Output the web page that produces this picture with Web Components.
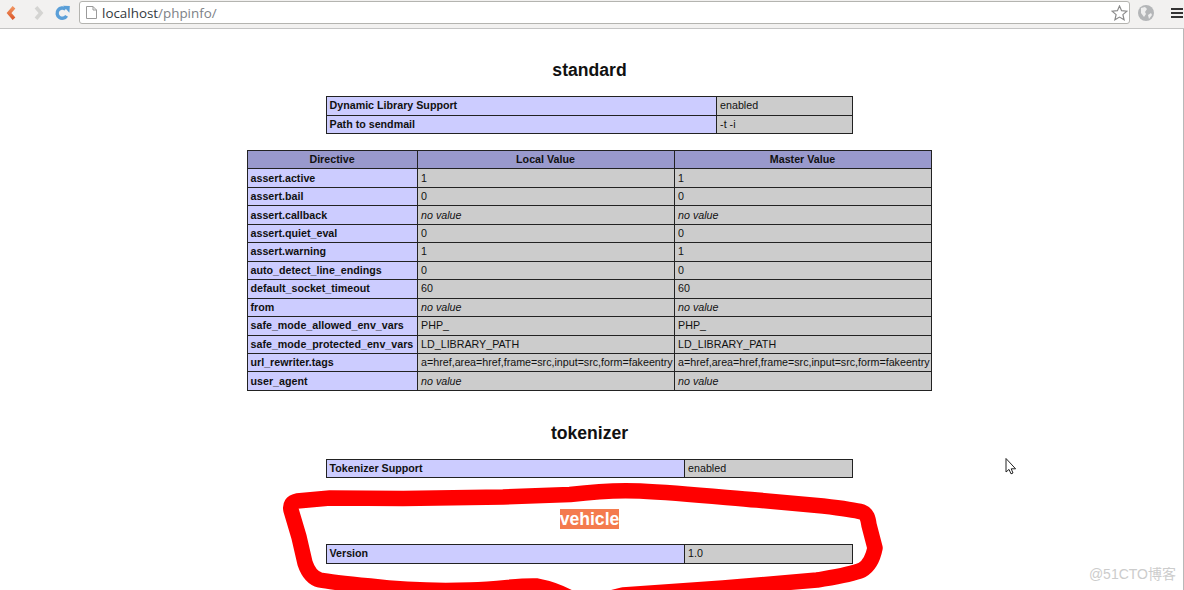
<!DOCTYPE html>
<html>
<head>
<meta charset="utf-8">
<title>phpinfo</title>
<style>
    html, body { margin: 0; padding: 0; height: 590px; overflow: hidden; background: #ffffff; }
    body { position: relative; font-family: "Liberation Sans", Arial, sans-serif; color: #111111; }
</style>
</head>
<body>
<browser-bar url-host="localhost" url-path="/phpinfo/"></browser-bar>
<php-page>
    <php-heading style="margin-top:31px">standard</php-heading>
    <php-table style="margin-top:16px" row-h="17.5" cols="390,136" rows='[["Dynamic Library Support","enabled"],["Path to sendmail","-t -i"]]'></php-table>
    <php-table style="margin-top:16px" row-h="17.46" cols="170,257,257" head='["Directive","Local Value","Master Value"]' rows='[
        ["assert.active","1","1"],
        ["assert.bail","0","0"],
        ["assert.callback","*no value","*no value"],
        ["assert.quiet_eval","0","0"],
        ["assert.warning","1","1"],
        ["auto_detect_line_endings","0","0"],
        ["default_socket_timeout","60","60"],
        ["from","*no value","*no value"],
        ["safe_mode_allowed_env_vars","PHP_","PHP_"],
        ["safe_mode_protected_env_vars","LD_LIBRARY_PATH","LD_LIBRARY_PATH"],
        ["url_rewriter.tags","a=href,area=href,frame=src,input=src,form=fakeentry","a=href,area=href,frame=src,input=src,form=fakeentry"],
        ["user_agent","*no value","*no value"]
    ]'></php-table>
    <php-heading style="margin-top:32px">tokenizer</php-heading>
    <php-table style="margin-top:16px" row-h="17" cols="358,168" rows='[["Tokenizer Support","enabled"]]'></php-table>
    <php-heading style="margin-top:31px" mark>vehicle</php-heading>
    <php-table style="margin-top:15px" row-h="18" cols="358,168" rows='[["Version","1.0"]]'></php-table>
</php-page>
<red-scribble></red-scribble>
<mouse-cursor></mouse-cursor>
<water-mark>@51CTO博客</water-mark>

<script>
class BrowserBar extends HTMLElement {
    constructor(){
        super();
        const shadow = this.attachShadow({mode:'open'});
        shadow.innerHTML = `
            <style>
                :host { display: flex; align-items: center; box-sizing: border-box; height: 29px; padding: 0 0 3px 0; background: #f2f1f0; border-bottom: 1px solid #c4c4c4; font-family: "Open Sans", "Liberation Sans", sans-serif; }
                svg { display: block; flex: none; }
                #nav { display: flex; align-items: center; padding-left: 6px; width: 79px; box-sizing: border-box; flex: none; }
                #nav svg:nth-child(2) { margin: 0 11px 0 18px; }
                #url { flex: 1; display: flex; align-items: center; height: 23px; box-sizing: border-box; background: #ffffff; border: 1px solid #b4b4b0; border-radius: 3px; padding: 0 1px 0 6px; font-size: 13.4px; }
                #host { color: #333a40; margin-left: 5px; }
                #path { color: #7d8186; flex: 1; }
                #tools { display: flex; align-items: center; gap: 17px; width: 54px; box-sizing: border-box; padding-left: 8px; flex: none; }
            </style>
            <div id="nav">
                <svg width="10" height="14" viewBox="0 0 10 14"><defs><linearGradient id="back" x1="0" y1="0" x2="0" y2="1"><stop offset="0" stop-color="#f0935f"/><stop offset="1" stop-color="#dc5a2c"/></linearGradient></defs><path d="M8 1.2 L3 7 L8 12.8" fill="none" stroke="url(#back)" stroke-width="3.6"/></svg>
                <svg width="10" height="14" viewBox="0 0 10 14"><path d="M2 1.2 L7 7 L2 12.8" fill="none" stroke="#d4d4d2" stroke-width="3.6"/></svg>
                <svg width="15" height="16" viewBox="0 0 15 16"><path d="M11.6 10.8 A5.1 5.1 0 1 1 10.6 4.3" fill="none" stroke="#5a9fd8" stroke-width="3.4"/><path d="M8 .8 L14.8 1 L14.4 7.8 Z" fill="#5a9fd8"/></svg>
            </div>
            <div id="url">
                <svg width="11" height="13" viewBox="0 0 11 13"><path d="M.5 .5 H7 L10.5 4 V12.5 H.5 Z M7 .5 V4 H10.5" fill="#ffffff" stroke="#9a9a9a"/></svg>
                <span id="host">${this.getAttribute("url-host")}</span><span id="path">${this.getAttribute("url-path")}</span>
                <svg width="17" height="16" viewBox="0 0 17 16"><path d="M8.5 1 L10.6 5.7 L15.9 6.2 L11.9 9.6 L13.1 14.8 L8.5 12.1 L3.9 14.8 L5.1 9.6 L1.1 6.2 L6.4 5.7 Z" fill="#ffffff" stroke="#8b8b8b" stroke-width="1.2"/></svg>
            </div>
            <div id="tools">
                <svg width="16" height="16" viewBox="0 0 16 16"><circle cx="8" cy="8" r="8" fill="#b4b6b8"/><path d="M3 3 L7 2 L9 4 L7 7 L8 9 L6 12 L3 8 Z M10 10 L13 8 L14 10 L11 14 Z" fill="#eeeeee"/></svg>
                <svg width="12" height="10" viewBox="0 0 12 10"><path d="M0 0 H12 V2 H0 Z M0 4 H12 V6 H0 Z M0 8 H12 V10 H0 Z" fill="#333333"/></svg>
            </div>
        `;
    }
}
customElements.define('browser-bar', BrowserBar);

class PhpPage extends HTMLElement {
    constructor(){
        super();
        this.attachShadow({mode:'open'}).innerHTML = `
            <style>
                :host { display: flex; flex-direction: column; align-items: center; box-sizing: border-box; height: 561px; padding-right: 5px; border-right: 1px solid #b8b8b8; overflow: hidden; }
            </style>
            <slot></slot>
        `;
    }
}
customElements.define('php-page', PhpPage);

class PhpHeading extends HTMLElement {
    constructor(){
        super();
        this.attachShadow({mode:'open'}).innerHTML = `
            <style>
                :host { display: block; padding-left: 1px; font: bold 17.6px/20px "Liberation Sans", Arial, sans-serif; color: #111111; text-align: center; }
                :host([mark]) span { background: #f47b4e; color: #ffffff; }
            </style>
            <span><slot></slot></span>
        `;
    }
}
customElements.define('php-heading', PhpHeading);

class PhpTable extends HTMLElement {
    constructor(){
        super();
        const cols = this.getAttribute("cols").split(","),
        head = JSON.parse(this.getAttribute("head") || "null"),
        rows = JSON.parse(this.getAttribute("rows")),
        rowH = this.getAttribute("row-h"),
        total = cols.reduce((a, b) => a + Number(b), 0);

        const cell = (text, i) => {
            if (i == 0) return `<td class="e">${text}</td>`;
            if (text[0] == "*") return `<td class="v"><i>${text.slice(1)}</i></td>`;
            return `<td class="v">${text}</td>`;
        };
        this.attachShadow({mode:'open'}).innerHTML = `
            <style>
                :host { display: block; font: 10.7px "Liberation Sans", Arial, sans-serif; color: #111111; }
                table { border-collapse: collapse; table-layout: fixed; width: ${total}px; }
                td, th { border: 1px solid #222222; padding: 0; height: ${rowH}px; box-sizing: content-box; white-space: nowrap; overflow: hidden; text-align: left; line-height: 13px; }
                th { background: #9999cc; text-align: center; font-weight: bold; }
                .e { background: #ccccff; font-weight: bold; padding-left: 3px; }
                .v { background: #cccccc; padding-left: 3.6px; }
            </style>
            <table>
                <colgroup>${cols.map(c => `<col style="width:${c}px">`).join("")}</colgroup>
                ${head ? `<tr>${head.map(h => `<th>${h}</th>`).join("")}</tr>` : ""}
                ${rows.map(r => `<tr>${r.map(cell).join("")}</tr>`).join("")}
            </table>
        `;
    }
}
customElements.define('php-table', PhpTable);

class RedScribble extends HTMLElement {
    constructor(){
        super();
        this.attachShadow({mode:'open'}).innerHTML = `
            <style>
                :host { position: absolute; left: 0; top: 0; width: 1184px; height: 590px; pointer-events: none; }
                svg { display: block; }
            </style>
            <svg width="1184" height="590" viewBox="0 0 1184 590">
                <path d="M582 606 C572 598 558 590 537 586 C520 585 503 589 470 590 C440 591 403 590 370 586 C350 584 330 582 320 580 C312 578 308 572 305 563 L299 537 L291 510 C290 505 292 502 297 501 L330 498 L403 498.5 L503 497 L570 494.5 C590 492 620 490 640 491 C680 493 720 497 757 500 L823 506 C840 508 855 510 862 512 C867 514 868 518 869 525 L875 548 C873 558 869 566 862 570 C850 575 835 577 817 580 L723 588 L623 595 L595 602"
                      fill="none" stroke="#ff0000" stroke-width="15.5" stroke-linejoin="round" stroke-linecap="round"/>
            </svg>
        `;
    }
}
customElements.define('red-scribble', RedScribble);

class MouseCursor extends HTMLElement {
    constructor(){
        super();
        this.attachShadow({mode:'open'}).innerHTML = `
            <style>
                :host { position: absolute; left: 1005px; top: 457px; width: 13px; height: 19px; }
                svg { display: block; }
            </style>
            <svg width="13" height="19" viewBox="0 0 13 19"><path d="M1 1.5 V15 L4 12.4 L6 16.8 L8 16 L6.2 11.8 H10.6 Z" fill="#ffffff" stroke="#222222" stroke-width="1"/></svg>
        `;
    }
}
customElements.define('mouse-cursor', MouseCursor);

class WaterMark extends HTMLElement {
    constructor(){
        super();
        this.attachShadow({mode:'open'}).innerHTML = `
            <style>
                :host { position: absolute; right: 8px; top: 566px; font: 14px/16px "Liberation Sans", "Noto Sans CJK SC", sans-serif; color: #cccccc; }
            </style>
            <slot></slot>
        `;
    }
}
customElements.define('water-mark', WaterMark);
</script>
</body>
</html>
